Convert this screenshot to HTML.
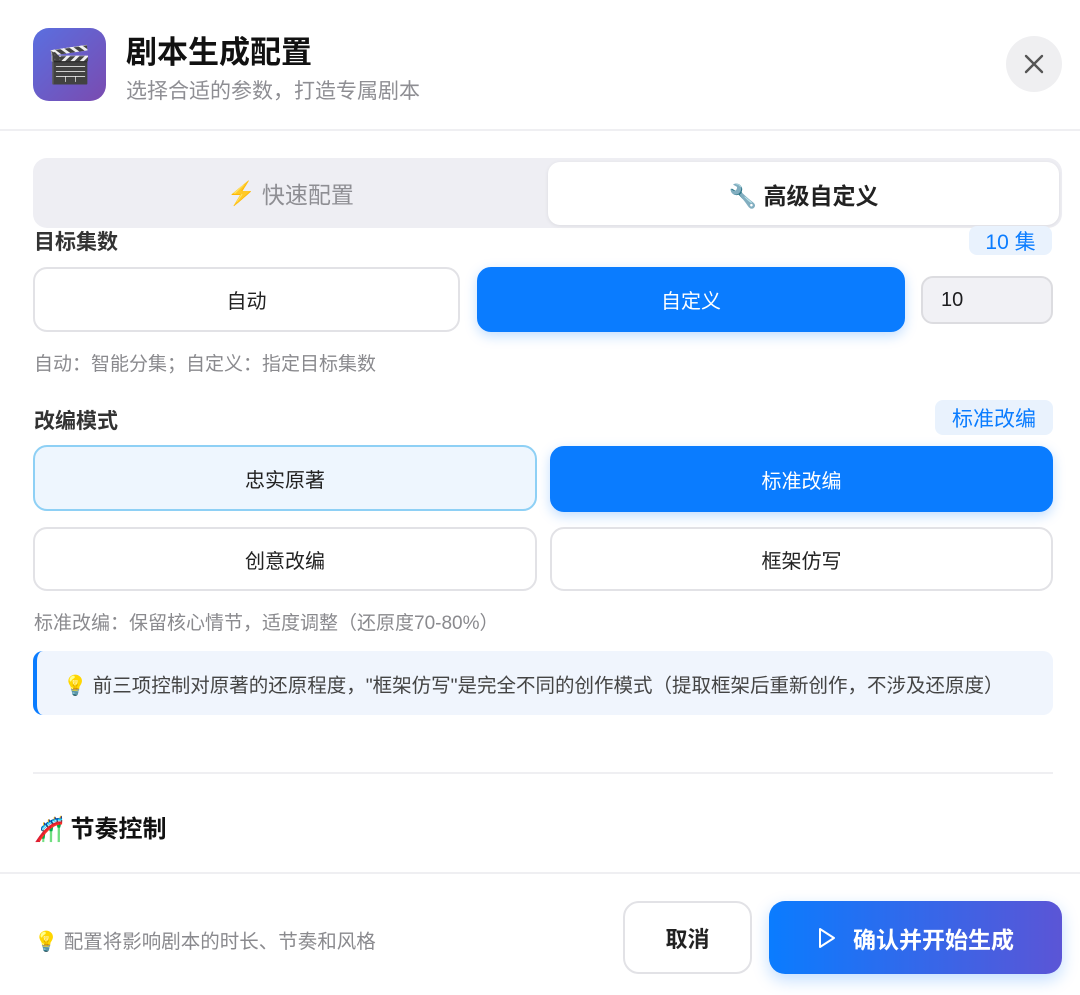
<!DOCTYPE html>
<html><head><meta charset="utf-8"><style>
*{margin:0;padding:0;box-sizing:border-box}
body{width:1080px;height:995px;background:#fff;font-family:"Liberation Sans","Noto Sans CJK SC",sans-serif;position:relative;overflow:hidden;color:#1d1d1f}
.a{position:absolute}
.btn{position:absolute;display:flex;align-items:center;justify-content:center;border-radius:14px;font-size:20px;border:2px solid #e2e2e6;background:#fff;color:#222}
.blue{background:#0a7cff;border-color:#0a7cff;color:#fff;box-shadow:0 4px 12px rgba(10,124,255,.25)}
.badge{position:absolute;background:#e9f2fd;color:#0a7cff;border-radius:8px;font-size:20px;display:flex;align-items:center;justify-content:center}
.lbl{position:absolute;font-size:21px;font-weight:bold;color:#333}
.hint{position:absolute;font-size:19px;color:#8a8a8e}
</style></head><body>
<div class="a" style="left:33px;top:28px;width:73px;height:73px;border-radius:16px;background:linear-gradient(135deg,#5a6fe0,#7a4bb0);display:flex;align-items:center;justify-content:center;font-size:36px">🎬</div>
<div class="a" style="left:126px;top:27px;font-size:31px;font-weight:bold;color:#111">剧本生成配置</div>
<div class="a" style="left:126px;top:75px;font-size:21px;color:#8e8e93">选择合适的参数，打造专属剧本</div>
<div class="a" style="left:1006px;top:36px;width:56px;height:56px;border-radius:50%;background:#efeff1"><svg width="56" height="56"><path d="M20 20L36 36M36 20L20 36" stroke="#555" stroke-width="2.4" stroke-linecap="round"/></svg></div>
<div class="a" style="left:0;top:129px;width:1080px;height:2px;background:#efeff2"></div>
<div class="a" style="left:33px;top:158px;width:1029px;height:70px;border-radius:14px;background:#eeeef3"></div>
<div class="a" style="left:33px;top:158px;width:515px;height:70px;display:flex;align-items:center;justify-content:center;font-size:23px;color:#8e8e93"><span style="color:#f5a623;margin-right:6px">⚡</span>快速配置</div>
<div class="a" style="left:548px;top:162px;width:511px;height:63px;border-radius:12px;background:#fff;box-shadow:0 1px 4px rgba(0,0,0,.08);display:flex;align-items:center;justify-content:center;font-size:23px;font-weight:bold;color:#222">🔧 高级自定义</div>
<div class="lbl" style="left:34px;top:226px">目标集数</div>
<div class="badge" style="left:969px;top:226px;width:83px;height:29px;font-size:21px">10 集</div>
<div class="btn" style="left:33px;top:267px;width:427px;height:65px">自动</div>
<div class="btn blue" style="left:477px;top:267px;width:428px;height:65px">自定义</div>
<div class="a" style="left:921px;top:276px;width:132px;height:48px;border-radius:12px;background:#f1f1f5;border:2px solid #dcdce0;font-size:20px;padding-left:18px;display:flex;align-items:center">10</div>
<div class="hint" style="left:34px;top:349px">自动：智能分集；自定义：指定目标集数</div>
<div class="lbl" style="left:34px;top:405px">改编模式</div>
<div class="badge" style="left:935px;top:400px;width:118px;height:35px;font-size:21px">标准改编</div>
<div class="btn" style="left:33px;top:445px;width:504px;height:66px;background:#eef6fe;border-color:#8ed0f5">忠实原著</div>
<div class="btn blue" style="left:550px;top:446px;width:503px;height:66px">标准改编</div>
<div class="btn" style="left:33px;top:527px;width:504px;height:64px">创意改编</div>
<div class="btn" style="left:550px;top:527px;width:503px;height:64px">框架仿写</div>
<div class="hint" style="left:34px;top:608px">标准改编：保留核心情节，适度调整（还原度70-80%）</div>
<div class="a" style="left:33px;top:651px;width:1020px;height:64px;border-radius:10px;background:#f0f5fd;border-left:4px solid #0a7cff;font-size:19.5px;color:#444;display:flex;align-items:center;padding-left:26px;white-space:nowrap">💡 前三项控制对原著的还原程度，"框架仿写"是完全不同的创作模式（提取框架后重新创作，不涉及还原度）</div>
<div class="a" style="left:33px;top:772px;width:1020px;height:2px;background:#efeff2"></div>
<div class="a" style="left:34px;top:809px;font-size:24px;font-weight:bold;color:#111">🎢 节奏控制</div>
<div class="a" style="left:0;top:872px;width:1080px;height:2px;background:#efeff2"></div>
<div class="a" style="left:34px;top:925px;font-size:19.5px;color:#8a8a8e">💡 配置将影响剧本的时长、节奏和风格</div>
<div class="btn" style="left:623px;top:901px;width:129px;height:73px;font-size:22px;font-weight:bold;border-radius:16px">取消</div>
<div class="btn" style="left:769px;top:901px;width:293px;height:73px;border:none;border-radius:16px;background:linear-gradient(90deg,#0a7cff,#5b55d6);color:#fff;font-size:23px;font-weight:bold;box-shadow:0 6px 16px rgba(10,124,255,.25)"><svg width="20" height="22" style="margin-right:16px"><path d="M3 2L17 11L3 20Z" fill="none" stroke="#fff" stroke-width="2" stroke-linejoin="round"/></svg>确认并开始生成</div>
</body></html>
